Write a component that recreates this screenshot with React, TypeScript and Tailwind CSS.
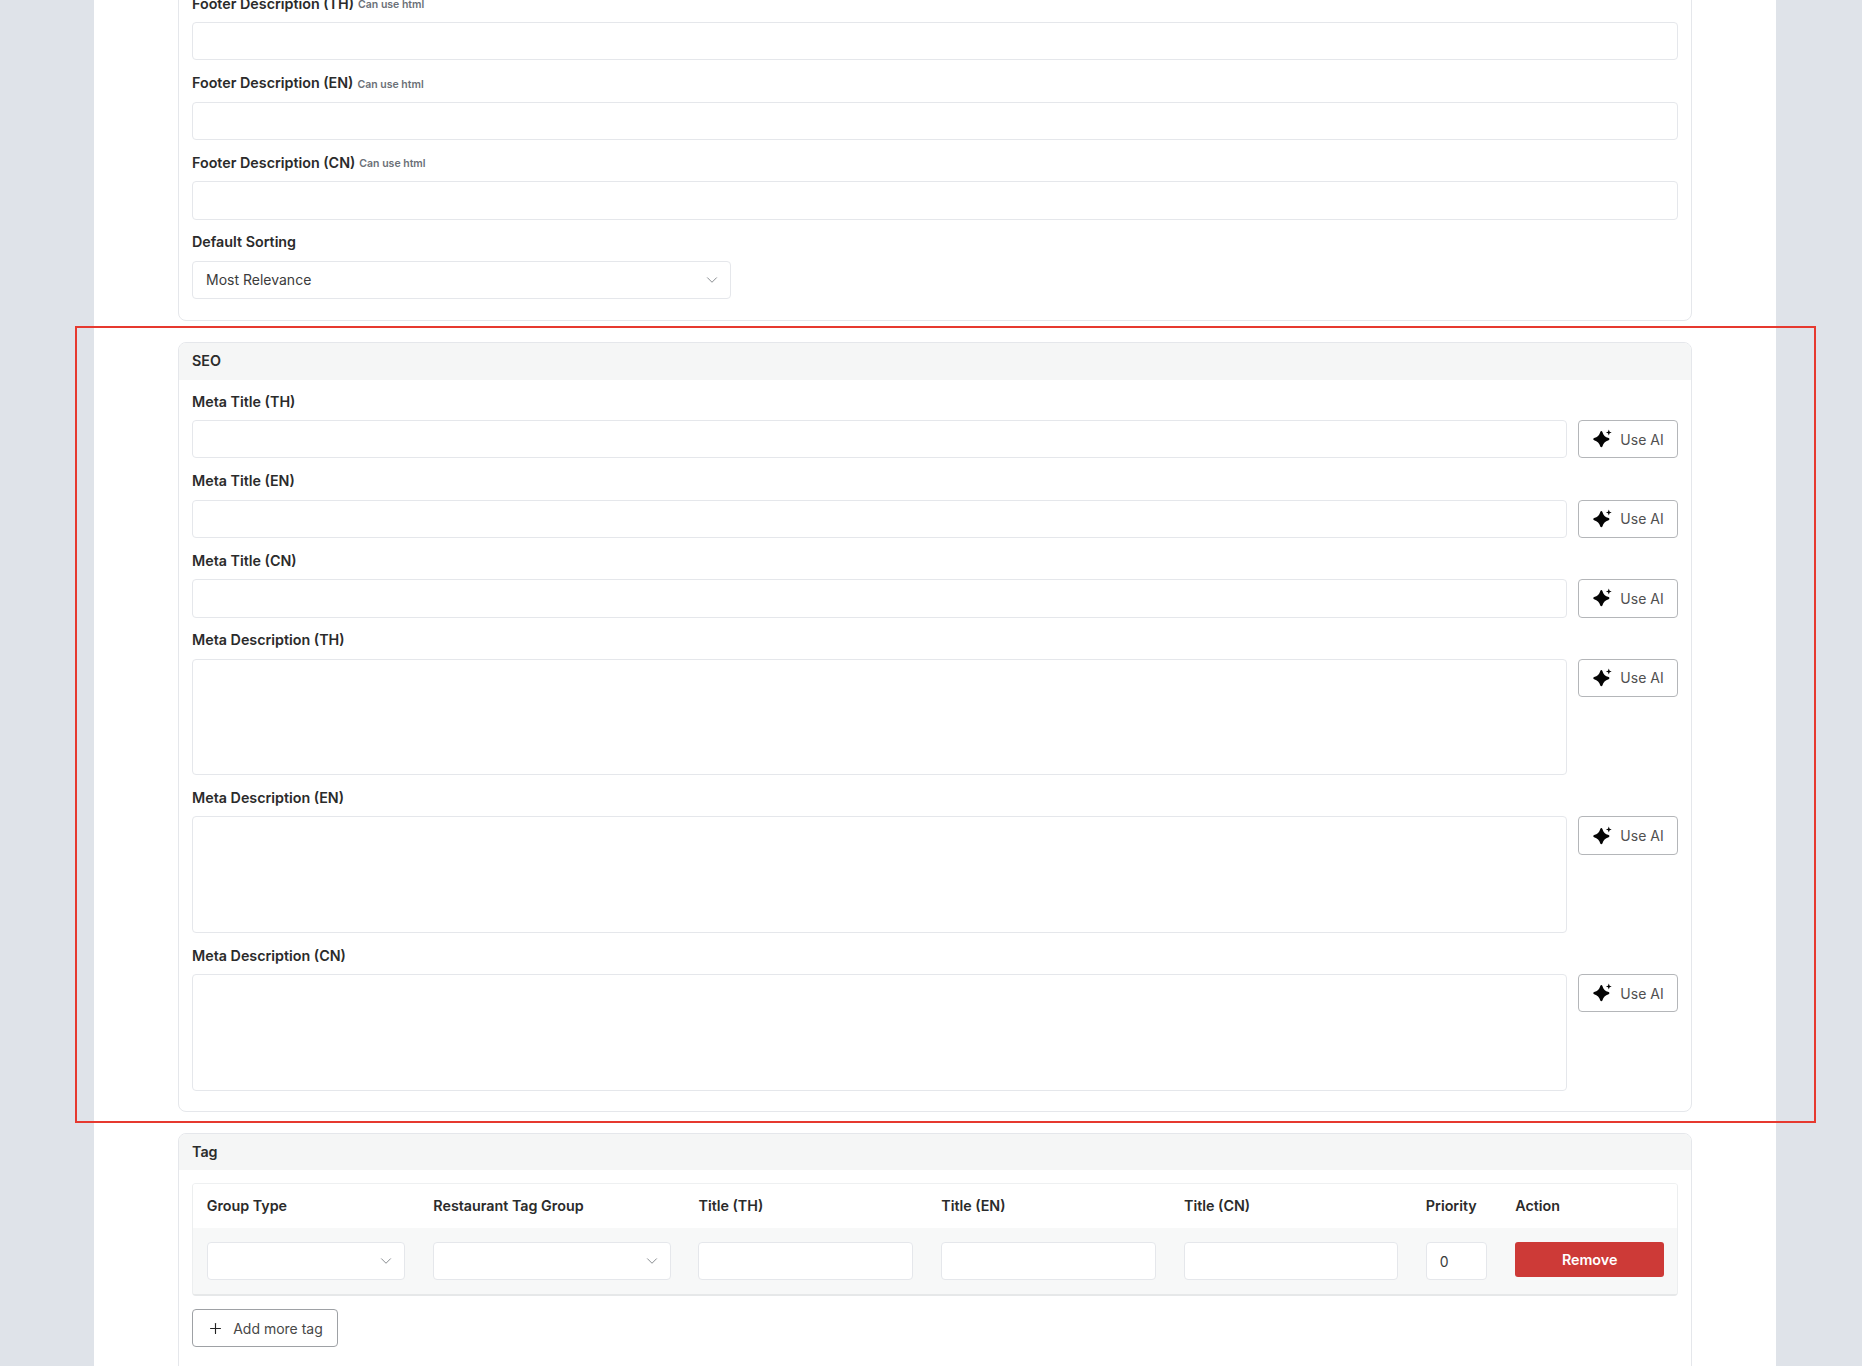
import React from "react";
import { ChevronDown, Plus } from "lucide-react";

const inputCls =
  "block w-full bg-white border border-[#e5e7eb] rounded-[4px] px-[13px] text-[14px] text-[#3b3b3b] outline-none";

function Sparkle() {
  return (
    <svg width="20" height="20" viewBox="0 0 20 20" className="shrink-0 translate-x-[1px]" aria-hidden="true">
      <path
        d="M7.300 2.900c.4-1.100 1.700-1.100 2.100 0 1 3.300 2.700 5.200 6.200 6.200 1.100.4 1.100 1.700 0 2.100-3.500 1-5.200 2.900-6.200 6.200-.4 1.100-1.700 1.100-2.100 0-1-3.300-2.800-5.200-6.200-6.200-1.100-.4-1.100-1.700 0-2.100 3.400-1 5.200-2.900 6.200-6.200z"
        fill="#050505"
      />
      <path d="M15.800 .6l.8 2.100 2.100.8-2.100.8-.8 2.100-.8-2.100-2.100-.8 2.100-.8z" fill="#050505" />
    </svg>
  );
}

function UseAi() {
  return (
    <button className="w-[100px] h-[38.4px] shrink-0 flex items-center justify-center gap-[8px] bg-white border border-[#b4b6b9] rounded-[4px] text-[14px] text-[#505050]">
      <Sparkle />
      <span>Use AI</span>
    </button>
  );
}

function Label({ text, hint }: { text: string; hint?: boolean }) {
  return (
    <div className="h-[20px] pt-[1.5px] mb-[9.2px] flex items-center leading-[20px] text-[14.3px] font-semibold text-[#2b2b2b] whitespace-nowrap">
      <span>{text}</span>
      {hint && <span className="ml-[4px] mt-[3px] text-[10.5px] font-semibold text-[#6b7077]">Can use html</span>}
    </div>
  );
}

function AiField({ label, area }: { label: string; area?: boolean }) {
  return (
    <div>
      <Label text={label} />
      <div className="flex items-start gap-[11px]">
        {area ? (
          <textarea className={`${inputCls} h-[116.5px] resize-none`} />
        ) : (
          <input className={`${inputCls} h-[38.4px]`} />
        )}
        <UseAi />
      </div>
    </div>
  );
}

function SelectBox({ value, className }: { value?: string; className: string }) {
  return (
    <button
      className={`flex items-center justify-between h-[38.4px] bg-white border border-[#e5e7eb] rounded-[4px] pl-[13px] pr-[9px] text-[14px] text-[#3b3b3b] ${className}`}
    >
      <span>{value}</span>
      <ChevronDown size={18} strokeWidth={1.1} className="text-[#6f7378]" />
    </button>
  );
}

function Card({ title, children }: { title: string; children: React.ReactNode }) {
  return (
    <section className="border border-[#e5e7eb] rounded-[8px] overflow-hidden">
      <h2 className="h-[36.5px] pb-[1px] flex items-center px-[13px] bg-[#f5f6f6] text-[14.3px] font-semibold text-[#2b2b2b]">
        {title}
      </h2>
      {children}
    </section>
  );
}

const gridCols = "grid grid-cols-[198.8px_237.4px_215px_215px_214px_61.6px_148.8px] gap-x-[27.8px] px-[13.7px]";

export default function App() {
  return (
    <div
      className="relative h-[1366px] overflow-hidden bg-[#dfe3e9] pl-[94px] pr-[86px]"
      style={{ fontFamily: "Inter, 'Noto Sans', sans-serif" }}
    >
      <main className="bg-white min-h-full pl-[84px] pr-[84px] flex flex-col gap-[21px] -mt-[40px]">
        <section className="border border-[#e5e7eb] rounded-[8px] pt-[31.8px] px-[13px] pb-[21px] flex flex-col gap-[12px]">
          {["Footer Description (TH)", "Footer Description (EN)", "Footer Description (CN)"].map((t) => (
            <div key={t}>
              <Label text={t} hint />
              <input className={`${inputCls} h-[38.4px]`} />
            </div>
          ))}
          <div>
            <Label text="Default Sorting" />
            <SelectBox value="Most Relevance" className="w-[538.5px]" />
          </div>
        </section>

        <Card title="SEO">
          <div className="pt-[11.2px] px-[13px] pb-[20px] flex flex-col gap-[12px]">
            <AiField label="Meta Title (TH)" />
            <AiField label="Meta Title (EN)" />
            <AiField label="Meta Title (CN)" />
            <AiField label="Meta Description (TH)" area />
            <AiField label="Meta Description (EN)" area />
            <AiField label="Meta Description (CN)" area />
          </div>
        </Card>

        <Card title="Tag">
          <div className="pt-[13px] px-[13px] pb-[40px]">
            <div className="border-t border-t-[#eef0f1] border-x border-x-[#eceeef] border-b-2 border-b-[#e6e8e9] rounded-[4px] overflow-hidden">
              <div className={`${gridCols} h-[44px] items-center bg-white text-[14.3px] font-semibold text-[#2b2b2b]`}>
                <div>Group Type</div>
                <div>Restaurant Tag Group</div>
                <div>Title (TH)</div>
                <div>Title (EN)</div>
                <div>Title (CN)</div>
                <div>Priority</div>
                <div>Action</div>
              </div>
              <div className={`${gridCols} bg-[#f7f8f8] pt-[14px] h-[65.5px] items-start`}>
                <SelectBox className="w-full" />
                <SelectBox className="w-full" />
                <input className={`${inputCls} h-[38.4px]`} />
                <input className={`${inputCls} h-[38.4px]`} />
                <input className={`${inputCls} h-[38.4px]`} />
                <input className={`${inputCls} h-[38.4px]`} defaultValue="0" />
                <button className="h-[35px] bg-[#cd3a37] rounded-[3px] text-white text-[14.3px] font-semibold">
                  Remove
                </button>
              </div>
            </div>
            <button className="mt-[13.5px] w-[146px] h-[38px] flex items-center justify-center gap-[9px] bg-white border border-[#9ea1a5] rounded-[4px] text-[14px] text-[#474747]">
              <Plus size={17} strokeWidth={1.6} className="text-[#222222]" />
              <span>Add more tag</span>
            </button>
          </div>
        </Card>
      </main>
      <div className="absolute left-[75px] top-[326px] w-[1740.5px] h-[797px] border-2 border-[#e6392f] pointer-events-none" />
    </div>
  );
}
